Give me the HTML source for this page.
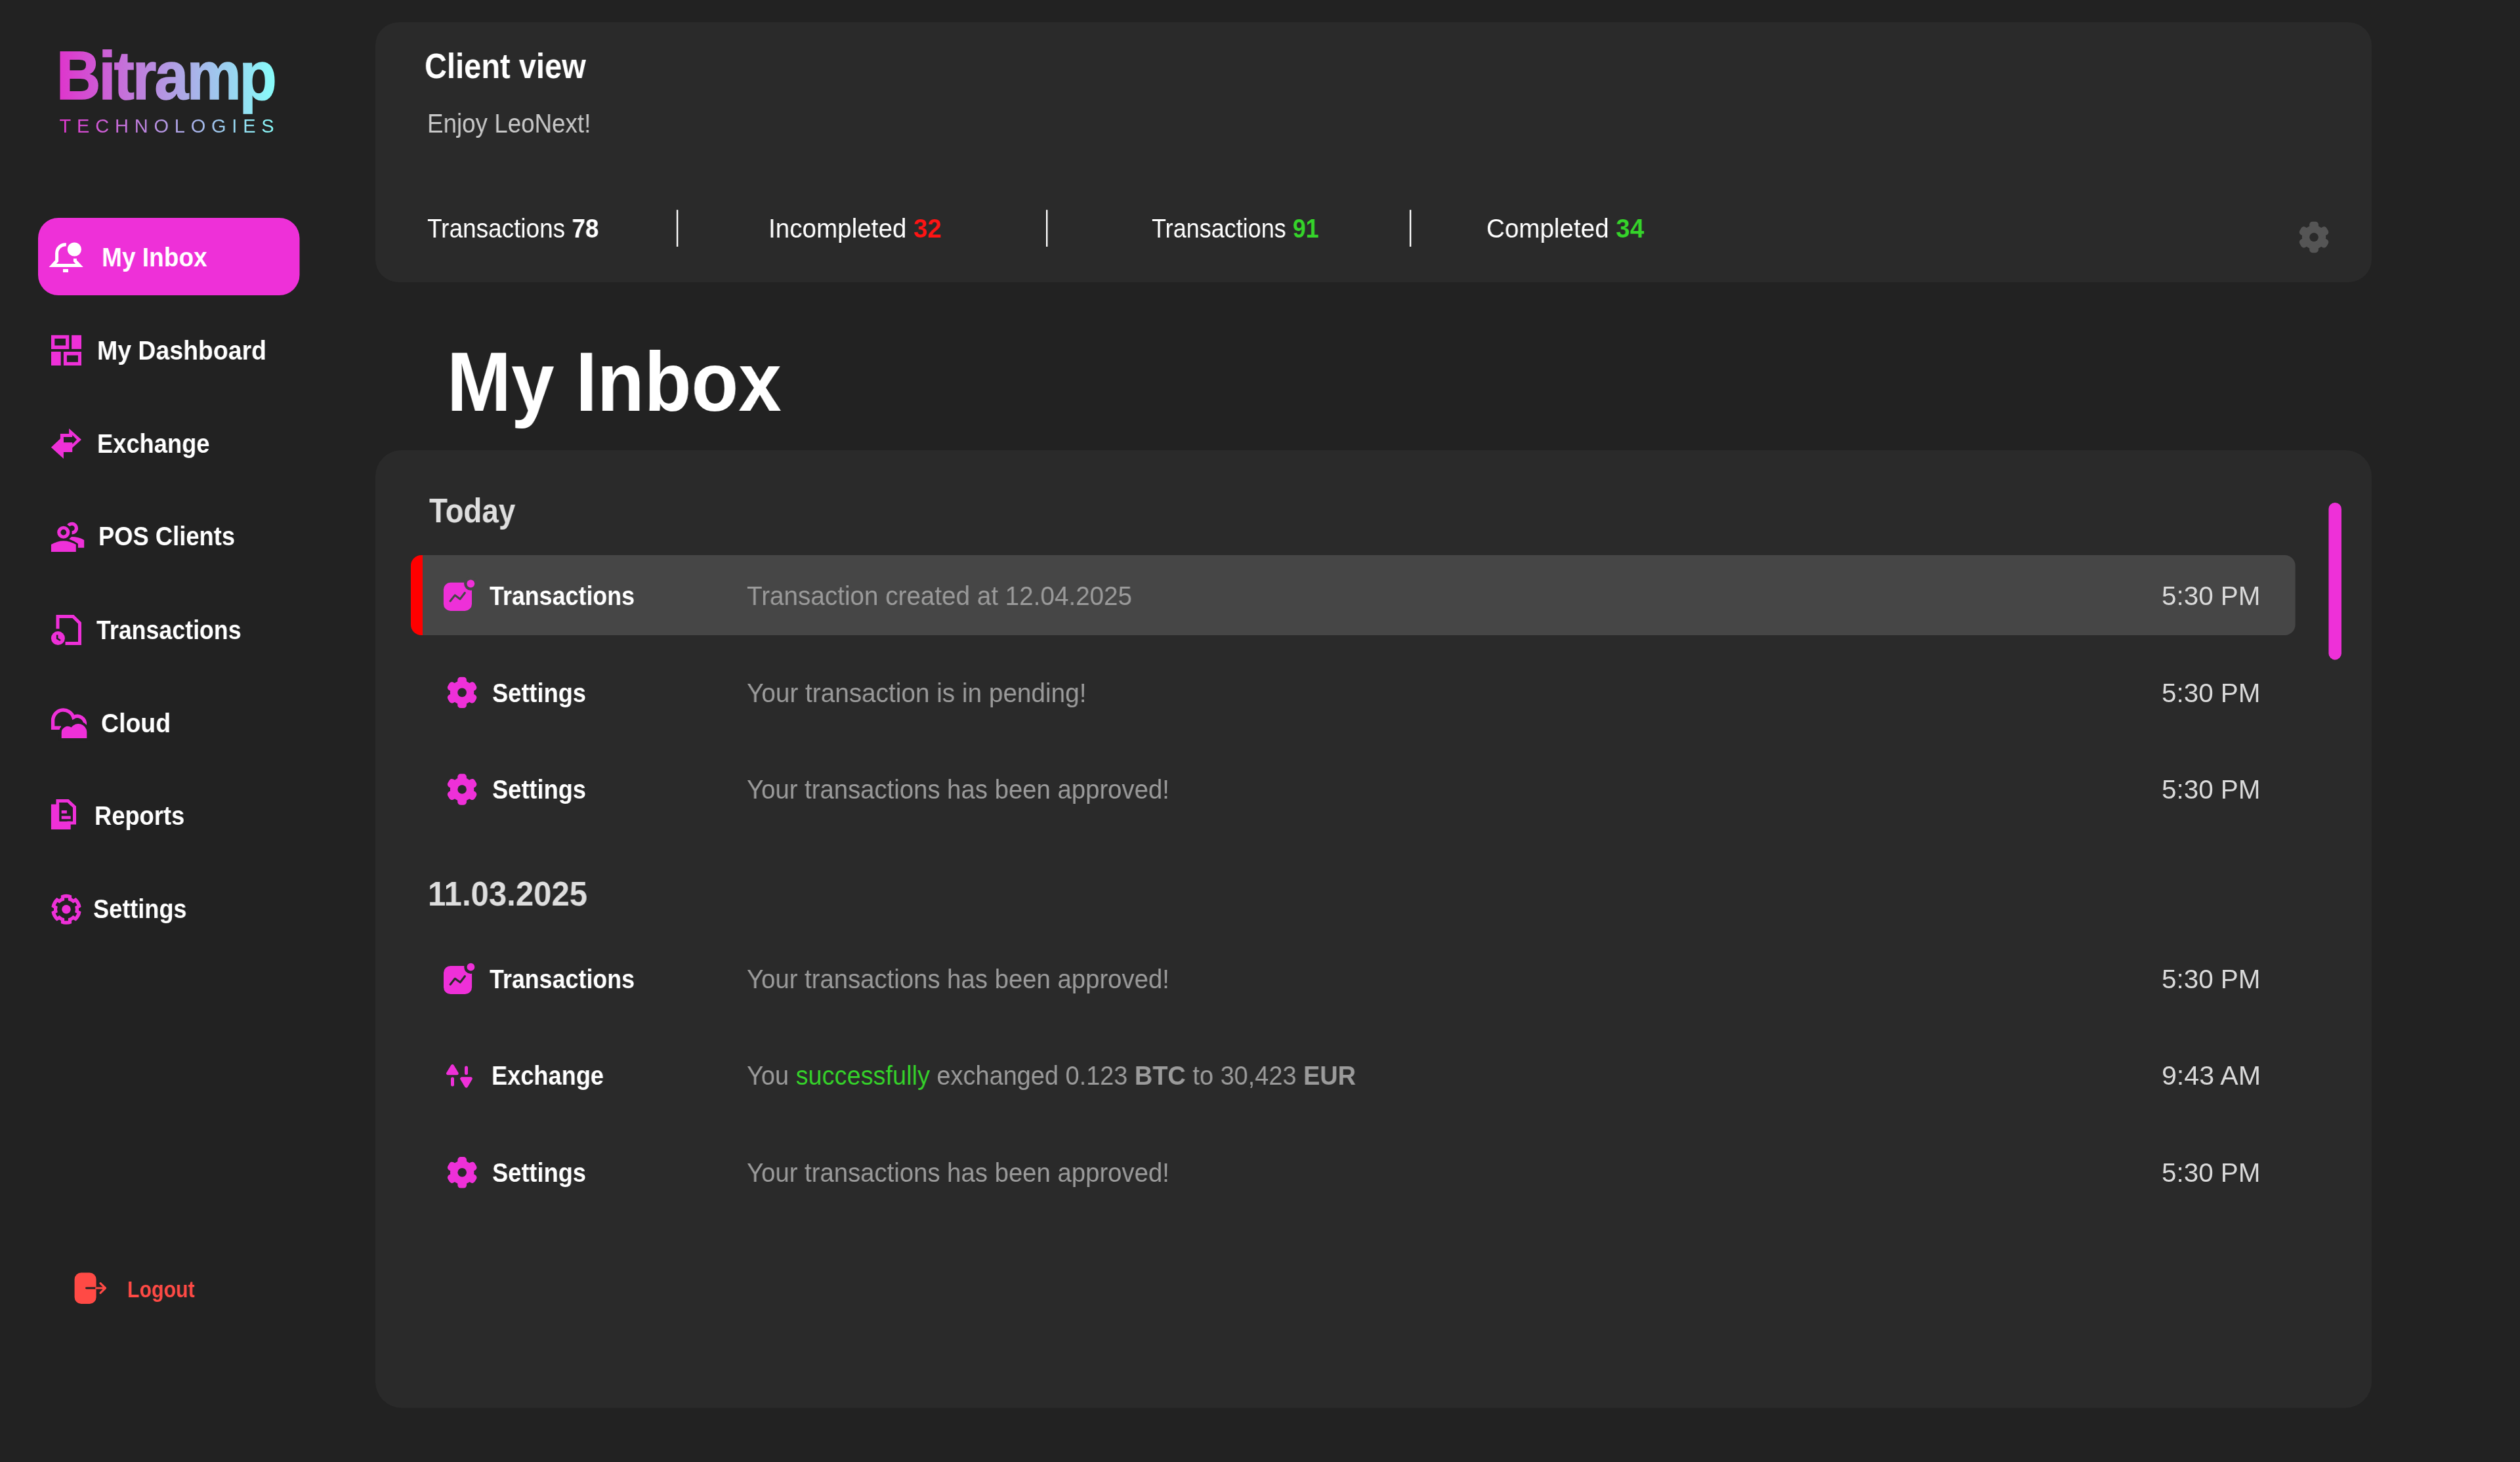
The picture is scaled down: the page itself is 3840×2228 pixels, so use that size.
<!DOCTYPE html>
<html><head><meta charset="utf-8">
<style>
html,body{margin:0;padding:0;}
body{width:3840px;height:2228px;background:#222222;position:relative;overflow:hidden;font-family:"Liberation Sans",sans-serif;color:#fff;}
.a{position:absolute;white-space:nowrap;will-change:transform;}
b{font-weight:bold;}
</style></head>
<body>
<svg class="a" style="left:0;top:0" width="3840" height="2228">
<defs><linearGradient id="lg" x1="92" y1="0" x2="418" y2="0" gradientUnits="userSpaceOnUse"><stop offset="0" stop-color="#de36cc"/><stop offset="1" stop-color="#88fcfa"/></linearGradient></defs>
<text x="86" y="150.7" font-family="Liberation Sans" font-size="104" font-weight="bold" letter-spacing="-3" textLength="333" lengthAdjust="spacingAndGlyphs" fill="url(#lg)" stroke="url(#lg)" stroke-width="1.6">Bitramp</text>
<text x="90.6" y="202" font-family="Liberation Sans" font-size="29" textLength="327" lengthAdjust="spacing" fill="url(#lg)">TECHNOLOGIES</text>
<rect x="572" y="34" width="3042" height="396" rx="35" fill="#2a2a2a"/>
<rect x="572" y="686" width="3042" height="1459.5" rx="40" fill="#2a2a2a"/>
<rect x="58" y="332" width="398.5" height="118" rx="31" fill="#ee30d8"/>
<path d="M100.8,372.9 A13,13 0 0 0 86.6,385.8 V397.5 L80.2,404.5 H121 L114.4,397.5 V394" stroke="#ffffff" stroke-width="5" fill="none" stroke-linejoin="miter" stroke-miterlimit="10"/>
<rect x="96" y="410" width="8" height="5" fill="#ffffff"/>
<circle cx="113.4" cy="380" r="10.6" fill="#ffffff"/>
<path fill="#ee30d8" fill-rule="evenodd" d="M78,510.8 h27.3 v21.1 h-27.3 Z M83.3,516.1 v10.5 h16.7 v-10.5 Z"/>
<rect x="109.1" y="510.8" width="14.9" height="21.1" fill="#ee30d8"/>
<rect x="78" y="535.9" width="14.7" height="21.1" fill="#ee30d8"/>
<path fill="#ee30d8" fill-rule="evenodd" d="M96.9,535.9 h27.1 v21.1 h-27.1 Z M101.9,541.4 v10.3 h17 v-10.3 Z"/>
<path fill="#ee30d8" d="M91.9,661 L105.2,661 L105.2,653.1 L124,670 L105.2,687 L105.2,680 L91.9,680 Z"/>
<path fill="#222222" d="M96.9,666 L110.2,666 L110.2,663 L117,670 L110.2,677 L110.2,674.4 L96.9,674.4 Z"/>
<path fill="#ee30d8" d="M77.9,681.8 L91.9,668.5 L96.9,668.5 L96.9,674.6 L110.2,674.6 L110.2,689 L96.9,689 L96.9,699 Z"/>
<path d="M104.23,800.74 A6.85,6.85 0 1 1 109.55,811.9" stroke="#ee30d8" stroke-width="5.1" fill="none"/>
<path fill="#ee30d8" d="M105.2,821.6 L109,818 Q120,818 128.2,823.1 V834.8 H118.8 V829 Q112,824 105.2,821.6 Z"/>
<circle cx="96.76" cy="811.26" r="12.3" fill="#222222"/>
<circle cx="96.76" cy="811.26" r="7" stroke="#ee30d8" stroke-width="5.2" fill="none"/>
<path d="M77.95,841 V829.8 Q96.76,818.5 115.76,829.8 V841 Z" fill="#222222" stroke="#222222" stroke-width="5.4"/>
<path d="M77.95,841 V829.8 Q96.76,818.5 115.76,829.8 V841 Z" fill="#ee30d8"/>
<path d="M88,958.2 V939.4 H111.4 L121.5,949.5 V980.5 H99.5" stroke="#ee30d8" stroke-width="5" fill="none"/>
<circle cx="88.4" cy="972.6" r="10.5" fill="#ee30d8"/>
<path d="M87.2,967.5 V973 L92,976" stroke="#222222" stroke-width="2.6" fill="none"/>
<path d="M93,1109.3 H80.6 V1098 A16,16 0 0 1 111.86,1093.2 A11.5,11.5 0 0 1 129.3,1105" stroke="#ee30d8" stroke-width="5.4" fill="none"/>
<path d="M93.7,1124.9 V1117 A9.5,9.5 0 0 1 108.6,1108.6 A13,13 0 0 1 132.3,1115.4 V1124.9 Z" fill="#222222" stroke="#222222" stroke-width="7.5"/>
<path d="M93.7,1124.9 V1117 A9.5,9.5 0 0 1 108.6,1108.6 A13,13 0 0 1 132.3,1115.4 V1124.9 Z" fill="#ee30d8"/>
<rect x="77.9" y="1225.7" width="29.8" height="38.3" fill="#ee30d8"/>
<path fill="#ee30d8" fill-rule="evenodd" d="M85.5,1218 H104.5 L116,1228.8 V1256.6 H85.5 Z M90.5,1223 V1251.6 H111 V1231 L102.5,1223 Z"/>
<rect x="90.5" y="1223" width="12" height="28.6" fill="#222222"/>
<path fill="#222222" d="M90.5,1223 H102.5 L111,1231 V1251.6 H90.5 Z"/>
<rect x="93.7" y="1235" width="8.2" height="4.6" fill="#ee30d8"/>
<rect x="93.7" y="1243.5" width="14" height="4.7" fill="#ee30d8"/>
<path fill-rule="evenodd" fill="#ee30d8" d="M92.90,1368.61 L92.90,1364.38 A22.9,22.9 0 0 1 109.10,1364.38 L109.10,1368.61 A19.0,19.0 0 0 1 111.83,1370.19 L111.83,1370.19 L115.50,1368.08 A22.9,22.9 0 0 1 123.60,1382.10 L119.93,1384.22 A19.0,19.0 0 0 1 119.93,1387.38 L119.93,1387.38 L123.60,1389.50 A22.9,22.9 0 0 1 115.50,1403.52 L111.83,1401.41 A19.0,19.0 0 0 1 109.10,1402.99 L109.10,1402.99 L109.10,1407.22 A22.9,22.9 0 0 1 92.90,1407.22 L92.90,1402.99 A19.0,19.0 0 0 1 90.17,1401.41 L90.17,1401.41 L86.50,1403.52 A22.9,22.9 0 0 1 78.40,1389.50 L82.07,1387.38 A19.0,19.0 0 0 1 82.07,1384.22 L82.07,1384.22 L78.40,1382.10 A22.9,22.9 0 0 1 86.50,1368.08 L90.17,1370.19 A19.0,19.0 0 0 1 92.90,1368.61 Z M98.15,1372.20 L98.15,1368.43 L103.85,1368.43 L103.85,1372.20 A13.9,13.9 0 0 1 111.36,1376.53 L111.36,1376.53 L114.62,1374.65 L117.47,1379.58 L114.21,1381.47 A13.9,13.9 0 0 1 114.21,1390.13 L114.21,1390.13 L117.47,1392.02 L114.62,1396.95 L111.36,1395.07 A13.9,13.9 0 0 1 103.85,1399.40 L103.85,1399.40 L103.85,1403.17 L98.15,1403.17 L98.15,1399.40 A13.9,13.9 0 0 1 90.64,1395.07 L90.64,1395.07 L87.38,1396.95 L84.53,1392.02 L87.79,1390.13 A13.9,13.9 0 0 1 87.79,1381.47 L87.79,1381.47 L84.53,1379.58 L87.38,1374.65 L90.64,1376.53 A13.9,13.9 0 0 1 98.15,1372.20 Z"/><circle cx="101" cy="1385.8" r="6.8" fill="#ee30d8"/>
<rect x="113.6" y="1939.6" width="33" height="47.3" rx="10" fill="#ff4a45"/>
<path d="M131.5,1963 H146.6" stroke="#222222" stroke-width="2.8" stroke-linecap="round"/>
<path d="M146.6,1963 H160.5 M153,1955.6 L160.5,1963 L153,1970.4" stroke="#ff4a45" stroke-width="3.2" fill="none" stroke-linecap="round" stroke-linejoin="round"/>
<rect x="1030.9" y="319.8" width="2.4" height="56.1" fill="#ffffff"/>
<rect x="1594" y="319.8" width="2.4" height="56.1" fill="#ffffff"/>
<rect x="2148" y="319.8" width="2.4" height="56.1" fill="#ffffff"/>
<circle cx="3526" cy="361.45320197044333" r="18.20" fill="#555555"/><rect x="3519.15" y="337.75" width="13.70" height="47.40" rx="4.6" fill="#555555" transform="rotate(0 3526.00 361.45)"/><rect x="3519.15" y="337.75" width="13.70" height="47.40" rx="4.6" fill="#555555" transform="rotate(60 3526.00 361.45)"/><rect x="3519.15" y="337.75" width="13.70" height="47.40" rx="4.6" fill="#555555" transform="rotate(120 3526.00 361.45)"/><circle cx="3526" cy="361.45320197044333" r="6.80" fill="#2a2a2a"/>
<rect x="626" y="846" width="40" height="122" rx="16" fill="#ff0000"/>
<rect x="644" y="846" width="2853.6" height="122" rx="16" fill="#464646"/>
<rect x="644" y="846" width="40" height="122" fill="#464646"/>
<rect x="3548.4" y="766" width="19.5" height="239.4" rx="9.75" fill="#ee30d8"/>
<rect x="675.9" y="887.8" width="43.1" height="43.1" rx="10.5" fill="#ee30d8"/><circle cx="717.3" cy="889.5" r="10.2" fill="#464646"/><circle cx="717.3" cy="889.5" r="5.9" fill="#ee30d8"/><path d="M686.10,916.00 L693.20,907.10 L701.10,912.90 L708.30,903.50" stroke="#464646" stroke-width="3.1" fill="none" stroke-linecap="round" stroke-linejoin="round"/>
<circle cx="704.1" cy="1055.4" r="18.20" fill="#ee30d8"/><rect x="697.25" y="1031.70" width="13.70" height="47.40" rx="4.6" fill="#ee30d8" transform="rotate(0 704.10 1055.40)"/><rect x="697.25" y="1031.70" width="13.70" height="47.40" rx="4.6" fill="#ee30d8" transform="rotate(60 704.10 1055.40)"/><rect x="697.25" y="1031.70" width="13.70" height="47.40" rx="4.6" fill="#ee30d8" transform="rotate(120 704.10 1055.40)"/><circle cx="704.1" cy="1055.4" r="6.80" fill="#2a2a2a"/>
<circle cx="704.1" cy="1203.0" r="18.20" fill="#ee30d8"/><rect x="697.25" y="1179.30" width="13.70" height="47.40" rx="4.6" fill="#ee30d8" transform="rotate(0 704.10 1203.00)"/><rect x="697.25" y="1179.30" width="13.70" height="47.40" rx="4.6" fill="#ee30d8" transform="rotate(60 704.10 1203.00)"/><rect x="697.25" y="1179.30" width="13.70" height="47.40" rx="4.6" fill="#ee30d8" transform="rotate(120 704.10 1203.00)"/><circle cx="704.1" cy="1203.0" r="6.80" fill="#2a2a2a"/>
<rect x="676" y="1472" width="43.1" height="43.1" rx="10.5" fill="#ee30d8"/><circle cx="717.4" cy="1473.7" r="10.2" fill="#2a2a2a"/><circle cx="717.4" cy="1473.7" r="5.9" fill="#ee30d8"/><path d="M686.20,1500.20 L693.30,1491.30 L701.20,1497.10 L708.40,1487.70" stroke="#2a2a2a" stroke-width="3.1" fill="none" stroke-linecap="round" stroke-linejoin="round"/>
<path d="M689.40,1624.60 L682.60,1635.80 L696.20,1635.80 Z" fill="#ee30d8" stroke="#ee30d8" stroke-width="5" stroke-linejoin="round"/><path d="M710.50,1655.20 L703.70,1643.80 L717.30,1643.80 Z" fill="#ee30d8" stroke="#ee30d8" stroke-width="5" stroke-linejoin="round"/><path d="M689.50,1644.00 L689.50,1653.00" stroke="#ee30d8" stroke-width="5" stroke-linecap="round"/><path d="M710.50,1627.00 L710.50,1635.60" stroke="#ee30d8" stroke-width="5" stroke-linecap="round"/>
<circle cx="704.2" cy="1786.8" r="18.20" fill="#ee30d8"/><rect x="697.35" y="1763.10" width="13.70" height="47.40" rx="4.6" fill="#ee30d8" transform="rotate(0 704.20 1786.80)"/><rect x="697.35" y="1763.10" width="13.70" height="47.40" rx="4.6" fill="#ee30d8" transform="rotate(60 704.20 1786.80)"/><rect x="697.35" y="1763.10" width="13.70" height="47.40" rx="4.6" fill="#ee30d8" transform="rotate(120 704.20 1786.80)"/><circle cx="704.2" cy="1786.8" r="6.80" fill="#2a2a2a"/>
</svg>
<div class="a" style="left:155.0px;top:371.7px;font-size:40.4px;line-height:40.4px;font-weight:bold;color:#fff;transform-origin:0 0;transform:scaleX(0.9179);">My Inbox</div>
<div class="a" style="left:148.1px;top:514.3px;font-size:40.4px;line-height:40.4px;font-weight:bold;color:#fff;transform-origin:0 0;transform:scaleX(0.9270);">My Dashboard</div>
<div class="a" style="left:148.2px;top:655.8px;font-size:40.4px;line-height:40.4px;font-weight:bold;color:#fff;transform-origin:0 0;transform:scaleX(0.8989);">Exchange</div>
<div class="a" style="left:150.0px;top:797.3px;font-size:40.4px;line-height:40.4px;font-weight:bold;color:#fff;transform-origin:0 0;transform:scaleX(0.9000);">POS Clients</div>
<div class="a" style="left:146.9px;top:939.8px;font-size:40.4px;line-height:40.4px;font-weight:bold;color:#fff;transform-origin:0 0;transform:scaleX(0.8851);">Transactions</div>
<div class="a" style="left:154.1px;top:1081.6px;font-size:40.4px;line-height:40.4px;font-weight:bold;color:#fff;transform-origin:0 0;transform:scaleX(0.9270);">Cloud</div>
<div class="a" style="left:144.2px;top:1222.8px;font-size:40.4px;line-height:40.4px;font-weight:bold;color:#fff;transform-origin:0 0;transform:scaleX(0.8987);">Reports</div>
<div class="a" style="left:142.1px;top:1365.4px;font-size:40.4px;line-height:40.4px;font-weight:bold;color:#fff;transform-origin:0 0;transform:scaleX(0.8949);">Settings</div>
<div class="a" style="left:194.0px;top:1947.4px;font-size:35px;line-height:35px;font-weight:bold;color:#ff4a45;transform-origin:0 0;transform:scaleX(0.8658);">Logout</div>
<div class="a" style="left:647.2px;top:74.1px;font-size:53px;line-height:53px;font-weight:bold;color:#fff;transform-origin:0 0;transform:scaleX(0.8873);">Client view</div>
<div class="a" style="left:651.2px;top:167.7px;font-size:40px;line-height:40px;font-weight:normal;color:#c8c8c8;transform-origin:0 0;transform:scaleX(0.9189);">Enjoy LeoNext!</div>
<div class="a" style="left:651.1px;top:327.5px;font-size:40.7px;line-height:40.7px;font-weight:normal;color:#fff;transform-origin:0 0;transform:scaleX(0.9080);">Transactions <b>78</b></div>
<div class="a" style="left:1171.2px;top:327.5px;font-size:40.7px;line-height:40.7px;font-weight:normal;color:#fff;transform-origin:0 0;transform:scaleX(0.9489);">Incompleted <b style="color:#ff1414">32</b></div>
<div class="a" style="left:1755.1px;top:327.5px;font-size:40.7px;line-height:40.7px;font-weight:normal;color:#fff;transform-origin:0 0;transform:scaleX(0.8846);">Transactions <b style="color:#35d42a">91</b></div>
<div class="a" style="left:2265.1px;top:327.5px;font-size:40.7px;line-height:40.7px;font-weight:normal;color:#fff;transform-origin:0 0;transform:scaleX(0.9484);">Completed <b style="color:#35d42a">34</b></div>
<div class="a" style="left:681.3px;top:518.4px;font-size:128px;line-height:128px;font-weight:bold;color:#fff;transform-origin:0 0;transform:scaleX(0.9189);">My Inbox</div>
<div class="a" style="left:653.6px;top:753.2px;font-size:51.5px;line-height:51.5px;font-weight:bold;color:#dedede;transform-origin:0 0;transform:scaleX(0.8878);">Today</div>
<div class="a" style="left:651.6px;top:1336.5px;font-size:51px;line-height:51px;font-weight:bold;color:#dedede;transform-origin:0 0;transform:scaleX(0.9629);">11.03.2025</div>
<div class="a" style="left:745.5px;top:888.1px;font-size:40.4px;line-height:40.4px;font-weight:bold;color:#fff;transform-origin:0 0;transform:scaleX(0.8871);">Transactions</div>
<div class="a" style="left:1137.5px;top:888.1px;font-size:40.4px;line-height:40.4px;font-weight:normal;color:#9b9b9b;transform-origin:0 0;transform:scaleX(0.9565);">Transaction created at 12.04.2025</div>
<div class="a" style="left:3294.4px;top:888.1px;font-size:40.4px;line-height:40.4px;font-weight:normal;color:#d9d9d9;transform-origin:0 0;transform:scaleX(0.9973);">5:30 PM</div>
<div class="a" style="left:749.6px;top:1035.8px;font-size:40.4px;line-height:40.4px;font-weight:bold;color:#fff;transform-origin:0 0;transform:scaleX(0.8975);">Settings</div>
<div class="a" style="left:1137.5px;top:1035.8px;font-size:40.4px;line-height:40.4px;font-weight:normal;color:#9b9b9b;transform-origin:0 0;transform:scaleX(0.9588);">Your transaction is in pending!</div>
<div class="a" style="left:3294.4px;top:1035.8px;font-size:40.4px;line-height:40.4px;font-weight:normal;color:#d9d9d9;transform-origin:0 0;transform:scaleX(0.9973);">5:30 PM</div>
<div class="a" style="left:749.6px;top:1183.4px;font-size:40.4px;line-height:40.4px;font-weight:bold;color:#fff;transform-origin:0 0;transform:scaleX(0.8975);">Settings</div>
<div class="a" style="left:1137.6px;top:1183.4px;font-size:40.4px;line-height:40.4px;font-weight:normal;color:#9b9b9b;transform-origin:0 0;transform:scaleX(0.9483);">Your transactions has been approved!</div>
<div class="a" style="left:3294.4px;top:1183.4px;font-size:40.4px;line-height:40.4px;font-weight:normal;color:#d9d9d9;transform-origin:0 0;transform:scaleX(0.9973);">5:30 PM</div>
<div class="a" style="left:745.5px;top:1471.5px;font-size:40.4px;line-height:40.4px;font-weight:bold;color:#fff;transform-origin:0 0;transform:scaleX(0.8871);">Transactions</div>
<div class="a" style="left:1137.6px;top:1471.5px;font-size:40.4px;line-height:40.4px;font-weight:normal;color:#9b9b9b;transform-origin:0 0;transform:scaleX(0.9483);">Your transactions has been approved!</div>
<div class="a" style="left:3294.4px;top:1471.5px;font-size:40.4px;line-height:40.4px;font-weight:normal;color:#d9d9d9;transform-origin:0 0;transform:scaleX(0.9973);">5:30 PM</div>
<div class="a" style="left:748.6px;top:1619.3px;font-size:40.4px;line-height:40.4px;font-weight:bold;color:#fff;transform-origin:0 0;transform:scaleX(0.8963);">Exchange</div>
<div class="a" style="left:1137.6px;top:1619.3px;font-size:40.4px;line-height:40.4px;font-weight:normal;color:#9b9b9b;transform-origin:0 0;transform:scaleX(0.9387);">You <span style="color:#35d42a">successfully</span> exchanged 0.123 <b>BTC</b> to 30,423 <b>EUR</b></div>
<div class="a" style="left:3294.4px;top:1619.3px;font-size:40.4px;line-height:40.4px;font-weight:normal;color:#d9d9d9;transform-origin:0 0;transform:scaleX(1.0182);">9:43 AM</div>
<div class="a" style="left:749.6px;top:1767.1px;font-size:40.4px;line-height:40.4px;font-weight:bold;color:#fff;transform-origin:0 0;transform:scaleX(0.8975);">Settings</div>
<div class="a" style="left:1137.6px;top:1767.1px;font-size:40.4px;line-height:40.4px;font-weight:normal;color:#9b9b9b;transform-origin:0 0;transform:scaleX(0.9483);">Your transactions has been approved!</div>
<div class="a" style="left:3294.4px;top:1767.1px;font-size:40.4px;line-height:40.4px;font-weight:normal;color:#d9d9d9;transform-origin:0 0;transform:scaleX(0.9973);">5:30 PM</div>
</body></html>
